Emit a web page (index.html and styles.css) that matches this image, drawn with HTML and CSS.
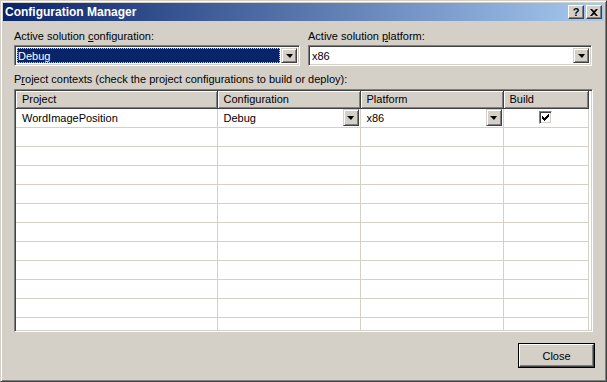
FILE: index.html
```html
<!DOCTYPE html>
<html lang="en">
<head>
    <meta charset="UTF-8">
    <title>Configuration Manager</title>
    <link rel="stylesheet" href="styles.css">
</head>
<body>
    <div class="window">
        <div class="titlebar">
            <span class="title">Configuration Manager</span>
            <div class="title-buttons">
                <span class="cap-btn">?</span>
                <span class="cap-btn close-x">
                    <svg width="8" height="7" viewBox="0 0 8 7"><path d="M0 0h2l2 2 2-2h2L5 3.5 8 7H6L4 5 2 7H0l3-3.5z" fill="#000"/></svg>
                </span>
            </div>
        </div>

        <div class="content">
            <div class="solution-row">
                <div class="field">
                    <label>Active solution <u>c</u>onfiguration:</label>
                    <div class="combo">
                        <div class="combo-text selected"><span class="focus">Debug</span></div>
                        <span class="drop-btn"><i class="arrow"></i></span>
                    </div>
                </div>
                <div class="field">
                    <label>Active solution <u>p</u>latform:</label>
                    <div class="combo">
                        <div class="combo-text">x86</div>
                        <span class="drop-btn"><i class="arrow"></i></span>
                    </div>
                </div>
            </div>

            <label class="grid-label">P<u>r</u>oject contexts (check the project configurations to build or deploy):</label>

            <div class="grid">
                <table>
                    <colgroup>
                        <col class="col-project">
                        <col class="col-config">
                        <col class="col-platform">
                        <col class="col-build">
                    </colgroup>
                    <thead>
                        <tr>
                            <th>Project</th>
                            <th>Configuration</th>
                            <th>Platform</th>
                            <th>Build</th>
                        </tr>
                    </thead>
                    <tbody>
                        <tr>
                            <td>WordImagePosition</td>
                            <td><div class="cell-combo">Debug<span class="drop-btn small"><i class="arrow"></i></span></div></td>
                            <td><div class="cell-combo">x86<span class="drop-btn small"><i class="arrow"></i></span></div></td>
                            <td class="center"><span class="check">
                                <svg width="7" height="7" viewBox="0 0 7 7"><path d="M0 2h1v1h1v1h1V3h1V2h1V1h1V0h1v3H6v1H5v1H4v1H3v1H2V6H1V5H0z" fill="#000"/></svg>
                            </span></td>
                        </tr>
                        <tr><td></td><td></td><td></td><td></td></tr>
                        <tr><td></td><td></td><td></td><td></td></tr>
                        <tr><td></td><td></td><td></td><td></td></tr>
                        <tr><td></td><td></td><td></td><td></td></tr>
                        <tr><td></td><td></td><td></td><td></td></tr>
                        <tr><td></td><td></td><td></td><td></td></tr>
                        <tr><td></td><td></td><td></td><td></td></tr>
                        <tr><td></td><td></td><td></td><td></td></tr>
                        <tr><td></td><td></td><td></td><td></td></tr>
                        <tr><td></td><td></td><td></td><td></td></tr>
                        <tr class="last"><td></td><td></td><td></td><td></td></tr>
                    </tbody>
                </table>
            </div>

            <div class="footer">
                <button class="btn default">Close</button>
            </div>
        </div>
    </div>
</body>
</html>
```

FILE: styles.css
```css
body {
    margin: 0;
    font-family: 'Liberation Sans', Arial, sans-serif;
    font-size: 11px;
    color: #000;
    background: #d4d0c8;
}

.window {
    width: 607px;
    height: 382px;
    box-sizing: border-box;
    background-color: #d4d0c8; /* classic 3d face */
    border-top: 1px solid #d4d0c8;
    border-left: 1px solid #d4d0c8;
    border-right: 1px solid #404040;
    border-bottom: 1px solid #404040;
    box-shadow: inset 1px 1px 0 #fff, inset -1px -1px 0 #808080;
    padding: 2px;
    display: flex;
    flex-direction: column;
}

.titlebar {
    height: 18px;
    background: linear-gradient(to right, #0a246a, #a6caf0);
    display: flex;
    align-items: center;
    justify-content: space-between;
    padding: 0 2px 0 2px;
}
.title {
    color: #fff;
    font-weight: bold;
    font-size: 12px;
}
.title-buttons {
    display: flex;
    gap: 2px;
}
.cap-btn {
    width: 16px;
    height: 14px;
    box-sizing: border-box;
    background: #d4d0c8;
    border-top: 1px solid #fff;
    border-left: 1px solid #fff;
    border-right: 1px solid #404040;
    border-bottom: 1px solid #404040;
    box-shadow: inset -1px -1px 0 #808080;
    display: flex;
    align-items: center;
    justify-content: center;
    font-weight: bold;
    font-size: 11px;
    line-height: 1;
}

.content {
    flex: 1;
    display: flex;
    flex-direction: column;
    padding: 9px 10px 10px 11px;
}

.solution-row {
    display: flex;
    gap: 8px;
}
.field {
    display: flex;
    flex-direction: column;
}
.field:first-child { width: 286px; }
.field:last-child { width: 284px; }
.field label {
    height: 14px;
    margin-bottom: 1px;
}

.combo {
    height: 21px;
    box-sizing: border-box;
    border-top: 1px solid #808080;
    border-left: 1px solid #808080;
    border-right: 1px solid #fff;
    border-bottom: 1px solid #fff;
    box-shadow: inset 1px 1px 0 #404040, inset -1px -1px 0 #d4d0c8;
    background: #fff;
    display: flex;
    padding: 2px;
}
.combo-text {
    flex: 1;
    display: flex;
    align-items: center;
    padding-left: 1px;
    margin-right: 1px;
}
.combo-text.selected {
    background: #0a246a;
    color: #fff;
    outline: 1px dotted #d4d080;
    outline-offset: -1px;
}

.drop-btn {
    width: 16px;
    box-sizing: border-box;
    background: #d4d0c8;
    border-top: 1px solid #d4d0c8;
    border-left: 1px solid #d4d0c8;
    border-right: 1px solid #404040;
    border-bottom: 1px solid #404040;
    box-shadow: inset 1px 1px 0 #fff, inset -1px -1px 0 #808080;
    display: flex;
    align-items: center;
    justify-content: center;
}
.arrow {
    width: 0;
    height: 0;
    border-left: 4px solid transparent;
    border-right: 3px solid transparent;
    border-top: 4px solid #000;
}

.grid-label {
    margin-top: 7px;
    height: 14px;
    margin-bottom: 2px;
}

.grid {
    height: 243px;
    box-sizing: border-box;
    width: 579px;
    border-top: 1px solid #808080;
    border-left: 1px solid #808080;
    border-right: 1px solid #fff;
    border-bottom: 1px solid #fff;
    box-shadow: inset 1px 1px 0 #404040, inset -1px -1px 0 #d4d0c8;
    background: #fff;
    padding: 1px 3px 1px 1px;
    overflow: hidden;
}
.grid table {
    border-collapse: collapse;
    table-layout: fixed;
    width: 572px;
}
.col-project { width: 201px; }
.col-config { width: 143px; }
.col-platform { width: 143px; }
.col-build { width: 85px; }

.grid th {
    height: 17px;
    box-sizing: border-box;
    padding: 0 0 0 6px;
    text-align: left;
    font-weight: normal;
    background: #d4d0c8;
    border-right: 1px solid #404040;
    border-bottom: 1px solid #404040;
    box-shadow: inset 1px 1px 0 #fff, inset -1px -1px 0 #808080;
}
.grid td {
    height: 19px;
    box-sizing: border-box;
    padding: 0 0 0 6px;
    border-right: 1px solid #d4d0c8;
    border-bottom: 1px solid #d4d0c8;
    white-space: nowrap;
}
.grid td.center {
    text-align: center;
    padding: 0;
}
.grid tr.last td { height: 14px; border-bottom: none; }

.cell-combo {
    display: flex;
    justify-content: space-between;
    align-items: center;
    height: 18px;
}
.drop-btn.small {
    height: 17px;
    margin-right: 1px;
}

.check {
    display: inline-flex;
    align-items: center;
    justify-content: center;
    width: 13px;
    height: 13px;
    box-sizing: border-box;
    vertical-align: middle;
    border-top: 1px solid #808080;
    border-left: 1px solid #808080;
    border-right: 1px solid #fff;
    border-bottom: 1px solid #fff;
    box-shadow: inset 1px 1px 0 #404040, inset -1px -1px 0 #d4d0c8;
    background: #fff;
}

.footer {
    display: flex;
    justify-content: flex-end;
    margin-top: 12px;
}
.btn {
    width: 75px;
    height: 23px;
    font-family: inherit;
    font-size: 11px;
    background: #d4d0c8;
    border-top: 1px solid #fff;
    border-left: 1px solid #fff;
    border-right: 1px solid #404040;
    border-bottom: 1px solid #404040;
    box-shadow: inset -1px -1px 0 #808080;
    padding: 0;
    color: #000;
}
.btn.default {
    outline: 1px solid #000;
    outline-offset: 0;
}
```
